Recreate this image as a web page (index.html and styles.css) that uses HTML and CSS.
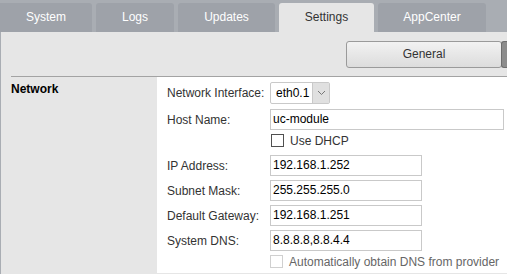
FILE: index.html
```html
<!DOCTYPE html>
<html>
<head>
<meta charset="utf-8">
<link rel="stylesheet" href="styles.css">
</head>
<body>
<div class="tabs">
  <div class="tab tab-system">System</div>
  <div class="tab tab-logs">Logs</div>
  <div class="tab tab-updates">Updates</div>
  <div class="tab tab-settings active">Settings</div>
  <div class="tab tab-app">AppCenter</div>
</div>
<div class="content">
  <div class="toolbar">
    <div class="btn">General</div>
    <div class="btn btn-dark"></div>
  </div>
  <div class="section">
    <div class="section-title">Network</div>
    <div class="form">
      <div class="row row-select">
        <div class="label">Network Interface:</div>
        <div class="select"><span class="select-val">eth0.1</span><span class="select-arrow"><svg width="9" height="6" viewBox="0 0 9 6"><path d="M1 1 L4.5 4.5 L8 1" fill="none" stroke="#777" stroke-width="1"/></svg></span></div>
      </div>
      <div class="row row-host">
        <div class="label">Host Name:</div>
        <div class="input input-wide">uc-module</div>
      </div>
      <div class="row row-check">
        <div class="label"></div>
        <span class="check"></span><span class="check-text">Use DHCP</span>
      </div>
      <div class="row">
        <div class="label">IP Address:</div>
        <div class="input">192.168.1.252</div>
      </div>
      <div class="row">
        <div class="label">Subnet Mask:</div>
        <div class="input">255.255.255.0</div>
      </div>
      <div class="row">
        <div class="label">Default Gateway:</div>
        <div class="input">192.168.1.251</div>
      </div>
      <div class="row">
        <div class="label">System DNS:</div>
        <div class="input">8.8.8.8,8.8.4.4</div>
      </div>
      <div class="row row-check row-last">
        <div class="label"></div>
        <span class="check check-disabled"></span><span class="check-text disabled">Automatically obtain DNS from provider</span>
      </div>
    </div>
  </div>
</div>
</body>
</html>
```
FILE: styles.css
```css
html, body {
  margin: 0;
  padding: 0;
}
body {
  width: 507px;
  height: 274px;
  overflow: hidden;
  background: #a9adb3;
  font-family: "Liberation Sans", Arial, sans-serif;
  font-size: 12px;
  color: #333;
}
.tabs {
  display: flex;
  gap: 4px;
  padding-top: 3px;
  height: 29px;
}
.tab {
  height: 29px;
  line-height: 29px;
  text-align: center;
  background: #9ea2a9;
  color: #fff;
  border-radius: 3px 3px 0 0;
  box-sizing: border-box;
}
.tab-system { width: 92px; border-top-left-radius: 0; }
.tab-logs { width: 78px; }
.tab-updates { width: 97px; }
.tab-settings { width: 95px; }
.tab-app { width: 108px; }
.tab.active {
  background: #e6e6e6;
  color: #333;
}
.content {
  margin-left: 1px;
  background: #e6e6e6;
  height: 242px;
  overflow: hidden;
}
.toolbar {
  margin-left: 10px;
  height: 45px;
  border-bottom: 1px solid #a3a3a3;
  display: flex;
  justify-content: flex-end;
  align-items: flex-start;
  padding-top: 9px;
  box-sizing: border-box;
  overflow: hidden;
}
.btn {
  flex: none;
  width: 156px;
  height: 27px;
  line-height: 25px;
  box-sizing: border-box;
  text-align: center;
  border: 1px solid #9a9a9a;
  border-radius: 3px;
  background: linear-gradient(#f2f2f2, #dcdcdc);
  color: #333;
  margin-right: -1px;
}
.btn-dark {
  width: 6px;
  border-color: #6e6e6e;
  border-right: none;
  border-radius: 3px 0 0 3px;
  background: #8c8c8c;
  margin-right: 0;
}
.section {
  display: flex;
  height: 196px;
}
.section-title {
  width: 156px;
  flex: none;
  box-sizing: border-box;
  padding: 5px 0 0 10px;
  font-weight: bold;
  color: #000;
}
.form {
  flex: 1;
  background: #fff;
  padding: 5px 0 0 10px;
}
.row {
  display: flex;
  align-items: center;
  height: 21px;
  margin-bottom: 4px;
}
.row-select {
  height: 22px;
  margin-bottom: 5px;
}
.row-check {
  height: 13px;
  margin-bottom: 8px;
}
.label {
  width: 103px;
  flex: none;
  color: #333;
}
.input {
  width: 152px;
  height: 21px;
  line-height: 19px;
  box-sizing: border-box;
  border: 1px solid #c9c9c9;
  padding-left: 2px;
  color: #000;
  background: #fff;
}
.input-wide {
  width: 234px;
}
.select {
  display: flex;
  width: 60px;
  height: 22px;
  box-sizing: border-box;
  border: 1px solid #c9c9c9;
  border-radius: 2px;
  background: #fff;
}
.select-val {
  flex: 1;
  line-height: 20px;
  padding-left: 5px;
  color: #000;
}
.select-arrow {
  width: 16px;
  background: #e0e0e0;
  border-left: 1px solid #c9c9c9;
  display: flex;
  align-items: center;
  justify-content: center;
}
.check {
  width: 13px;
  height: 13px;
  box-sizing: border-box;
  border: 1px solid #505050;
  background: #fff;
  margin-left: 1px;
  flex: none;
}
.check-disabled {
  border-color: #d0d0d0;
  margin-left: 0;
}
.check-text {
  margin-left: 6px;
  color: #333;
}
.check-text.disabled {
  color: #666;
}
```
